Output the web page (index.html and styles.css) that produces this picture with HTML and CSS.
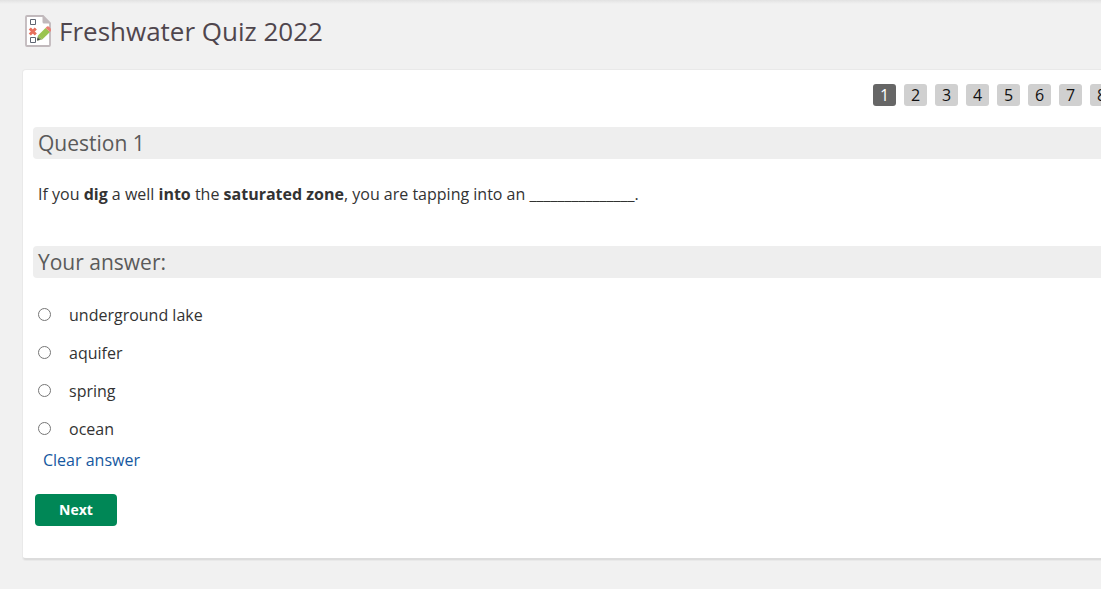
FILE: index.html
```html
<!DOCTYPE html>
<html lang="en">
<head>
<meta charset="utf-8">
<title>Freshwater Quiz 2022</title>
<link rel="stylesheet" href="styles.css">
</head>
<body>
<header class="page-header">
  <svg class="quiz-icon" viewBox="0 0 26 32" aria-hidden="true">
    <path d="M2 1H18L25 8V30Q25 31 24 31H2Q1 31 1 30V2Q1 1 2 1Z" fill="#fff" stroke="#c1b9bc" stroke-width="1.8"/>
    <path d="M17.500 .5L25.500 8.500H19Q17.500 8.500 17.500 7Z" fill="#c1b9bc"/>
    <path d="M5.500 4.500H10.500V9.500H5.500ZM5.500 22.500H10.500V27.500H5.500Z" fill="#fff" stroke="#5f6672" stroke-width="1"/>
    <path d="M4.800 13.500L10.800 19.500M10.800 13.500L4.800 19.500" stroke="#e76f5c" stroke-width="3"/>
    <path d="M13 20.400L20.500 12.900L25 17L17.200 24.600Z" fill="#9bc44f"/>
    <path d="M20.500 12.900L22 11.500Q23.200 10.800 24.400 12L25.500 13.200Q26.300 14.400 25.800 16L25 17Z" fill="#e98074"/>
    <path d="M13 20.400L17.200 24.600L12 25.600Z" fill="#8aa65c"/>
    <path d="M12.600 22.600L15 25L12 25.600Z" fill="#444"/>
  </svg>
  <h1 class="page-title">Freshwater Quiz 2022</h1>
</header>
<main class="card">
  <nav class="pager" aria-label="Questions">
    <a class="page current" href="#q1" aria-current="page">1</a>
    <a class="page" href="#q2">2</a>
    <a class="page" href="#q3">3</a>
    <a class="page" href="#q4">4</a>
    <a class="page" href="#q5">5</a>
    <a class="page" href="#q6">6</a>
    <a class="page" href="#q7">7</a>
    <a class="page" href="#q8">8</a>
  </nav>
  <form class="question" id="q1">
    <h2 class="bar">Question 1</h2>
    <p class="prompt">If you <b>dig</b> a well <b>into</b> the <b>saturated zone</b>, you are tapping into an _______________.</p>
    <h2 class="bar" id="answer-heading">Your answer:</h2>
    <div class="choices" role="radiogroup" aria-labelledby="answer-heading">
      <label class="choice"><input class="radio" type="radio" name="answer" value="lake">underground lake</label>
      <label class="choice"><input class="radio" type="radio" name="answer" value="aquifer">aquifer</label>
      <label class="choice"><input class="radio" type="radio" name="answer" value="spring">spring</label>
      <label class="choice"><input class="radio" type="radio" name="answer" value="ocean">ocean</label>
    </div>
    <a class="clear" href="#q1">Clear answer</a>
    <button class="next" type="submit">Next</button>
  </form>
</main>
</body>
</html>
```
FILE: styles.css
```css
* {
  box-sizing: border-box;
}

body {
  margin: 0;
  padding-bottom: 24px;
  background: #f1f1f1;
  color: #333;
  font: 16px/24px "Open Sans", sans-serif;
  overflow-x: hidden;
}

.page-header {
  display: flex;
  align-items: center;
  gap: 8px;
  padding: 13px 24px 21px 25px;
  background: linear-gradient(#e2e2e2, #f1f1f1 4px);
}

.quiz-icon {
  width: 26px;
  height: 32px;
}

.page-title {
  margin: 0;
  color: #4f464d;
  font-size: 26px;
  font-weight: 400;
  line-height: 36px;
}

.card {
  margin-left: 23px;
  padding: 14px 0 32px 10px;
  border-bottom: 2px solid #dcdcdc;
  background: #fff;
  border-radius: 3px 0 0 3px;
  box-shadow: 0 0 0 1px #e9e9e9;
}

.pager {
  display: flex;
  justify-content: flex-end;
  gap: 8px;
  margin: 0 -12px 21px 0;
}

.page {
  width: 23px;
  border-radius: 3px;
  background: #d0d0d0;
  color: #111;
  line-height: 22px;
  text-align: center;
  text-decoration: none;
}

.current {
  background: #666;
  color: #fff;
}

.bar {
  margin: 0;
  padding: 0 5px;
  border-radius: 4px 0 0 4px;
  background: #eee;
  color: #5a5a5a;
  font-size: 21px;
  font-weight: 400;
  line-height: 32px;
}

.prompt {
  margin: 0;
  padding: 23px 5px 40px;
}

.choices {
  display: grid;
  justify-items: start;
  gap: 14px;
  padding: 25px 5px 7px;
}

.choice {
  display: flex;
  align-items: center;
  gap: 18px;
}

.radio {
  width: 13px;
  height: 13px;
  margin: 0 0 2px;
}

.clear {
  display: table;
  margin-left: 10px;
  color: #1558a0;
  text-decoration: none;
}

.next {
  display: block;
  min-width: 82px;
  margin: 22px 0 0 2px;
  padding: 0 24px;
  border: 0;
  border-radius: 4px;
  background: #008756;
  color: #fff;
  font: 700 14px/32px "Open Sans", sans-serif;
}
```
